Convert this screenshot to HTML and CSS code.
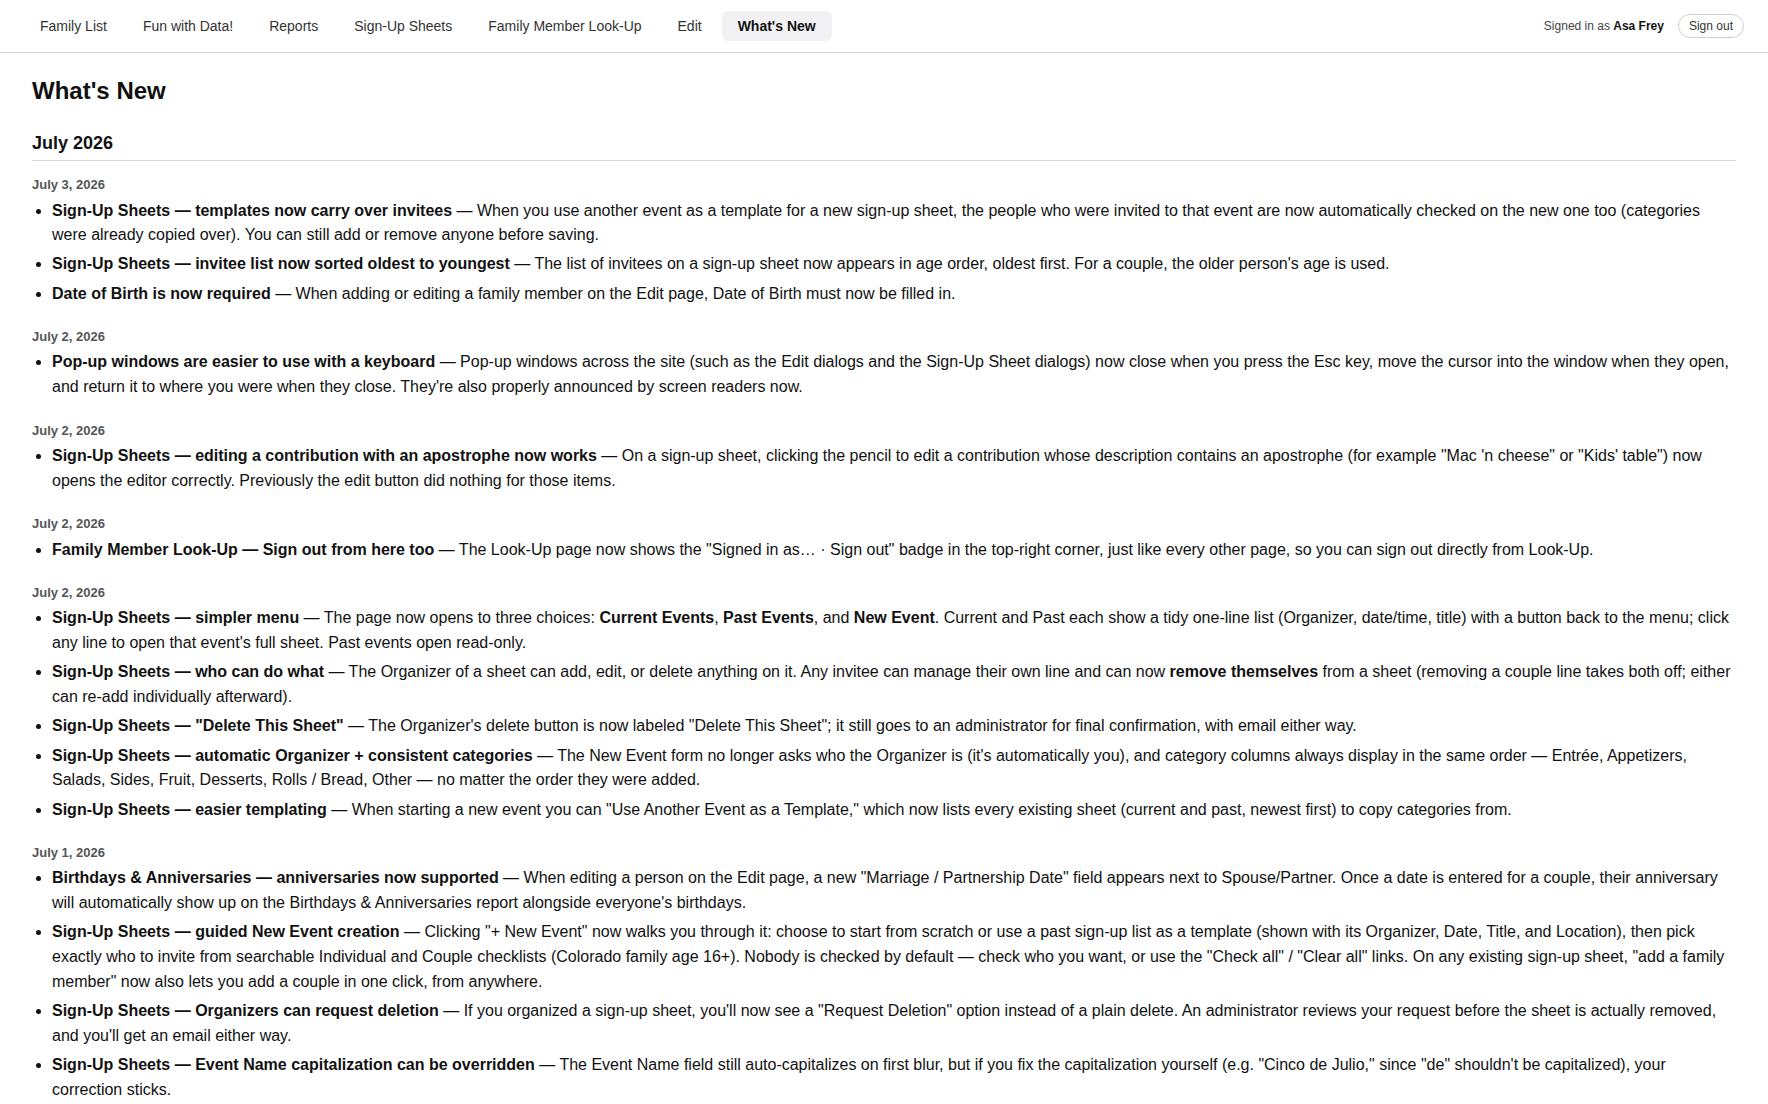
FILE: index.html
```html
<!DOCTYPE html>
<html lang="en">
<head>
  <meta charset="UTF-8" />
  <meta name="viewport" content="width=device-width, initial-scale=1.0" />
  <title>What's New</title>
  <link rel="stylesheet" href="styles.css">
</head>
<body>
  <nav class="topnav">
    <div class="nav-links">
      <a href="#">Family List</a>
      <a href="#">Fun with Data!</a>
      <a href="#">Reports</a>
      <a href="#">Sign-Up Sheets</a>
      <a href="#">Family Member Look-Up</a>
      <a href="#">Edit</a>
      <a href="#" class="active">What's New</a>
    </div>
    <div class="user-badge">
      <span>Signed in as <strong>Asa Frey</strong></span>
      <button class="signout">Sign out</button>
    </div>
  </nav>

  <main class="page">
    <h1>What's New</h1>

    <section class="month">
      <h2>July 2026</h2>

      <div class="day">
        <div class="date">July 3, 2026</div>
        <ul>
          <li><strong>Sign-Up Sheets — templates now carry over invitees</strong> — When you use another event as a template for a new sign-up sheet, the people who were invited to that event are now automatically checked on the new one too (categories were already copied over). You can still add or remove anyone before saving.</li>
          <li><strong>Sign-Up Sheets — invitee list now sorted oldest to youngest</strong> — The list of invitees on a sign-up sheet now appears in age order, oldest first. For a couple, the older person's age is used.</li>
          <li><strong>Date of Birth is now required</strong> — When adding or editing a family member on the Edit page, Date of Birth must now be filled in.</li>
        </ul>
      </div>

      <div class="day">
        <div class="date">July 2, 2026</div>
        <ul>
          <li><strong>Pop-up windows are easier to use with a keyboard</strong> — Pop-up windows across the site (such as the Edit dialogs and the Sign-Up Sheet dialogs) now close when you press the Esc key, move the cursor into the window when they open, and return it to where you were when they close. They're also properly announced by screen readers now.</li>
        </ul>
      </div>

      <div class="day">
        <div class="date">July 2, 2026</div>
        <ul>
          <li><strong>Sign-Up Sheets — editing a contribution with an apostrophe now works</strong> — On a sign-up sheet, clicking the pencil to edit a contribution whose description contains an apostrophe (for example "Mac 'n cheese" or "Kids' table") now opens the editor correctly. Previously the edit button did nothing for those items.</li>
        </ul>
      </div>

      <div class="day">
        <div class="date">July 2, 2026</div>
        <ul>
          <li><strong>Family Member Look-Up — Sign out from here too</strong> — The Look-Up page now shows the "Signed in as… · Sign out" badge in the top-right corner, just like every other page, so you can sign out directly from Look-Up.</li>
        </ul>
      </div>

      <div class="day">
        <div class="date">July 2, 2026</div>
        <ul>
          <li><strong>Sign-Up Sheets — simpler menu</strong> — The page now opens to three choices: <strong>Current Events</strong>, <strong>Past Events</strong>, and <strong>New Event</strong>. Current and Past each show a tidy one-line list (Organizer, date/time, title) with a button back to the menu; click any line to open that event's full sheet. Past events open read-only.</li>
          <li><strong>Sign-Up Sheets — who can do what</strong> — The Organizer of a sheet can add, edit, or delete anything on it. Any invitee can manage their own line and can now <strong>remove themselves</strong> from a sheet (removing a couple line takes both off; either can re-add individually afterward).</li>
          <li><strong>Sign-Up Sheets — "Delete This Sheet"</strong> — The Organizer's delete button is now labeled "Delete This Sheet"; it still goes to an administrator for final confirmation, with email either way.</li>
          <li><strong>Sign-Up Sheets — automatic Organizer + consistent categories</strong> — The New Event form no longer asks who the Organizer is (it's automatically you), and category columns always display in the same order — Entrée, Appetizers, Salads, Sides, Fruit, Desserts, Rolls / Bread, Other — no matter the order they were added.</li>
          <li><strong>Sign-Up Sheets — easier templating</strong> — When starting a new event you can "Use Another Event as a Template," which now lists every existing sheet (current and past, newest first) to copy categories from.</li>
        </ul>
      </div>

      <div class="day">
        <div class="date">July 1, 2026</div>
        <ul>
          <li><strong>Birthdays &amp; Anniversaries — anniversaries now supported</strong> — When editing a person on the Edit page, a new "Marriage / Partnership Date" field appears next to Spouse/Partner. Once a date is entered for a couple, their anniversary will automatically show up on the Birthdays &amp; Anniversaries report alongside everyone's birthdays.</li>
          <li><strong>Sign-Up Sheets — guided New Event creation</strong> — Clicking "+ New Event" now walks you through it: choose to start from scratch or use a past sign-up list as a template (shown with its Organizer, Date, Title, and Location), then pick exactly who to invite from searchable Individual and Couple checklists (Colorado family age 16+). Nobody is checked by default — check who you want, or use the "Check all" / "Clear all" links. On any existing sign-up sheet, "add a family member" now also lets you add a couple in one click, from anywhere.</li>
          <li><strong>Sign-Up Sheets — Organizers can request deletion</strong> — If you organized a sign-up sheet, you'll now see a "Request Deletion" option instead of a plain delete. An administrator reviews your request before the sheet is actually removed, and you'll get an email either way.</li>
          <li><strong>Sign-Up Sheets — Event Name capitalization can be overridden</strong> — The Event Name field still auto-capitalizes on first blur, but if you fix the capitalization yourself (e.g. "Cinco de Julio," since "de" shouldn't be capitalized), your correction sticks.</li>
        </ul>
      </div>
    </section>
  </main>
</body>
</html>
```

FILE: styles.css
```css
body {
  margin: 0;
  font-family: "Liberation Sans", Arial, sans-serif;
  background: #fff;
  color: #111;
}

/* top navigation */
.topnav {
  display: flex;
  align-items: center;
  justify-content: space-between;
  padding: 11px 24px;
  border-bottom: 1px solid #d4d4d4;
}
.nav-links {
  display: flex;
  gap: 4px;
}
.nav-links a {
  padding: 6px 16px;
  font-size: 14px;
  line-height: 18px;
  color: #333;
  text-decoration: none;
  border-radius: 6px;
}
.nav-links a.active {
  background: #f2f2f4;
  color: #111;
  font-weight: 700;
}
.user-badge {
  display: flex;
  align-items: center;
  gap: 14px;
  font-size: 12px;
  color: #444;
}
.user-badge strong {
  color: #111;
}
.signout {
  font-family: inherit;
  font-size: 12px;
  color: #333;
  background: #fff;
  border: 1px solid #d0d0d0;
  border-radius: 999px;
  padding: 4px 10px;
  line-height: 14px;
  cursor: pointer;
}

/* content */
.page {
  padding: 22px 32px 40px;
}
h1 {
  margin: 0 0 26px;
  font-size: 24px;
  line-height: 31px;
  font-weight: 700;
}
h2 {
  margin: 0 0 15px;
  padding-bottom: 5px;
  font-size: 18px;
  line-height: 23px;
  font-weight: 700;
  border-bottom: 1px solid #d8d8d8;
}
.day + .day {
  margin-top: 21.5px;
}
.date {
  font-size: 13px;
  line-height: 17px;
  font-weight: 700;
  color: #555;
  margin-bottom: 5.5px;
}
.day ul {
  margin: 0;
  padding-left: 20px;
}
.day li {
  font-size: 16px;
  line-height: 1.55;
  margin-bottom: 4.4px;
}
```
